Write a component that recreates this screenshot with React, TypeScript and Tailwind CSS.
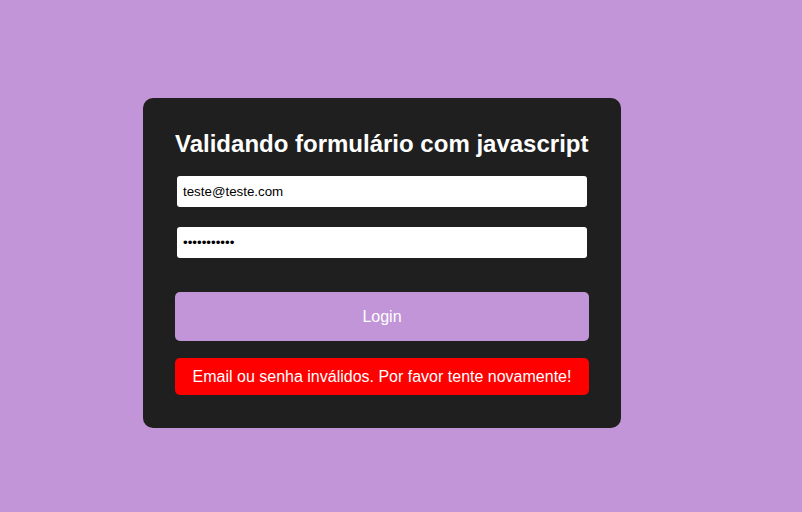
export default function App() {
  return (
    <div className="min-h-[512px] w-full bg-[#c195d7] pt-[98px] pl-[143px] font-['Liberation_Sans',Arial,sans-serif]">
      <div className="w-[478px] rounded-[10px] bg-[#1f1f1f] px-8 pt-8 pb-[33px]">
        <h1 className="text-[24px] leading-[28px] font-bold text-white whitespace-nowrap">
          Validando formulário com javascript
        </h1>
        <form className="flex flex-col" onSubmit={(e) => e.preventDefault()}>
          <input
            type="email"
            defaultValue="teste@teste.com"
            className="mx-[2px] mt-[18px] h-[31px] rounded-[3px] bg-white px-[6px] text-[13.33px] text-black outline-none"
          />
          <input
            type="password"
            defaultValue="12345678901"
            className="mx-[2px] mt-[20px] h-[31px] rounded-[3px] bg-white px-[6px] text-[13.33px] text-black outline-none"
          />
          <button
            type="submit"
            className="mt-[34px] h-[49px] rounded-[5px] bg-[#c195d7] text-[16px] text-white"
          >
            Login
          </button>
          <div className="mt-[17px] flex h-[37px] items-center justify-center rounded-[5px] bg-[#ff0000] text-[16px] text-white">
            Email ou senha inválidos. Por favor tente novamente!
          </div>
        </form>
      </div>
    </div>
  );
}
